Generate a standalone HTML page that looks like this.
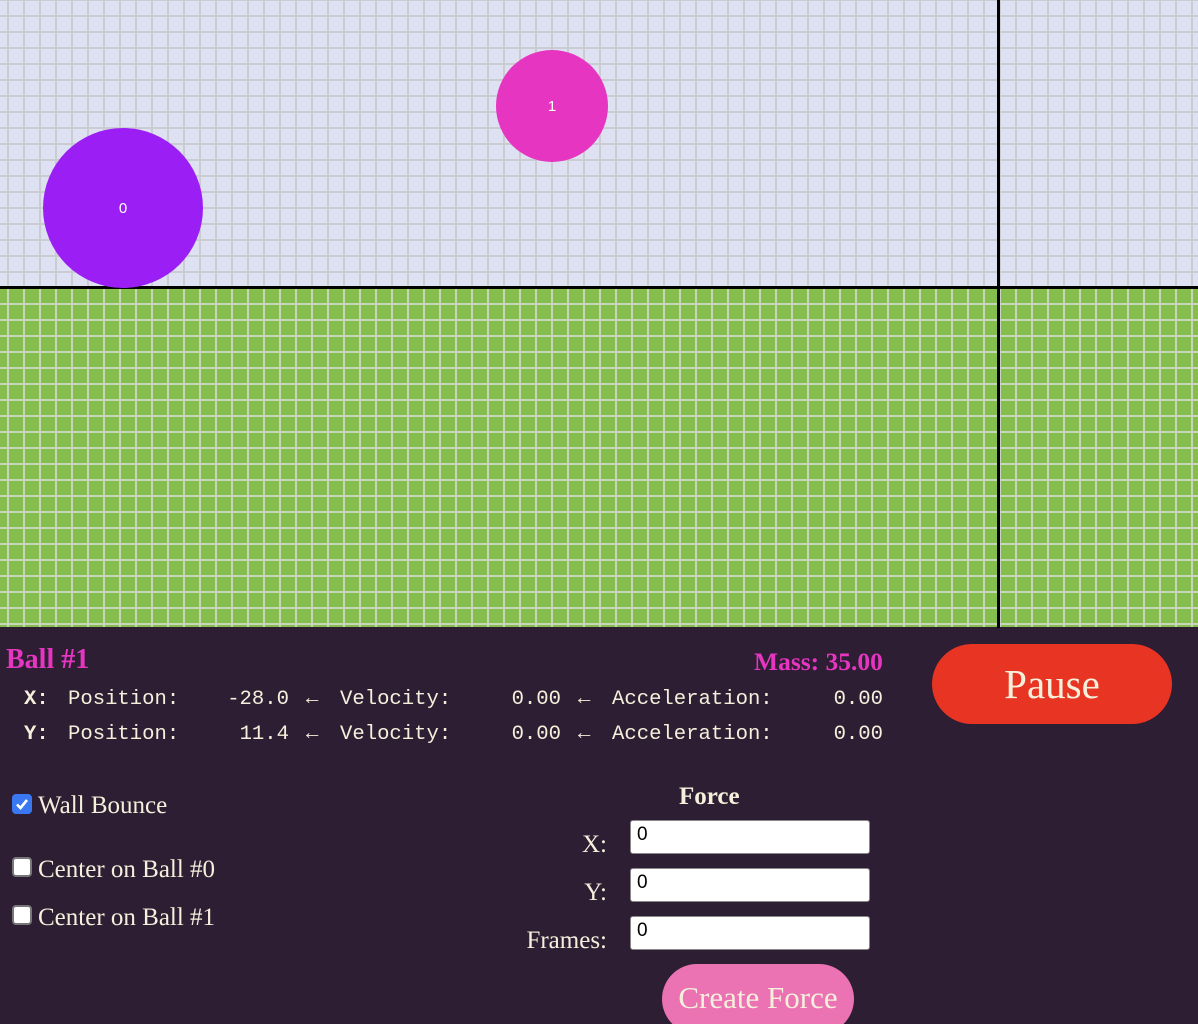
<!DOCTYPE html>
<html><head><meta charset="utf-8"><style>
*{margin:0;padding:0;box-sizing:border-box}
html,body{width:1198px;height:1024px;overflow:hidden;background:#2e1e33}
body{position:relative;font-family:"Liberation Serif",serif;color:#f5f0dc}
.sky{position:absolute;left:0;top:0;width:1198px;height:287px;background-color:#dde1f1;
background-image:linear-gradient(to right,#cbccd2 0 2px,transparent 2px 16px),linear-gradient(to bottom,#cbccd2 0 2px,transparent 2px 16px);
background-size:16px 16px;background-position:7px 15px}
.grass{position:absolute;left:0;top:289px;width:1198px;height:338px;background-color:#86be4e;
background-image:linear-gradient(to right,#c8d6bc 0 2px,transparent 2px 16px),linear-gradient(to bottom,#c8d6bc 0 2px,transparent 2px 16px);
background-size:16px 16px;background-position:7px 14px}
.hl{position:absolute;left:0;top:286px;width:1198px;height:3px;background:#000}
.vl{position:absolute;left:997px;top:0;width:3px;height:628px;background:#000}
.ball{position:absolute;border-radius:50%;color:#fff;font-family:"Liberation Sans",sans-serif;font-size:15px;display:flex;align-items:center;justify-content:center}
.m{position:absolute;font-family:"Liberation Mono",monospace;font-size:20.6px;line-height:20px;white-space:pre}
.r{text-align:right}
.t{position:absolute;white-space:nowrap}
.cb{position:absolute;width:20px;height:20px;border:2px solid #777;border-radius:4px;background:#fff}
input{position:absolute;left:630px;width:240px;height:34px;border:1px solid #888;border-radius:3px;font-family:"Liberation Sans",sans-serif;font-size:19px;padding:0 0 4px 6px;background:#fff;color:#000}
</style></head><body>
<div class="sky"></div><div class="grass"></div><div class="hl"></div><div class="vl"></div>
<div class="ball" style="left:43px;top:128px;width:160px;height:160px;background:#9b1ff5">0</div>
<div class="ball" style="left:496px;top:50px;width:112px;height:112px;background:#e535c1">1</div>

<div class="t" style="left:6px;top:644px;font-size:28px;font-weight:bold;color:#e535c1">Ball #1</div>
<div class="t" style="left:754px;top:647px;font-size:25.5px;font-weight:bold;color:#e535c1">Mass: 35.00</div>
<div class="t" style="left:932px;top:644px;width:240px;height:80px;border-radius:40px;background:#e83422;font-size:41px;text-align:center;line-height:80px">Pause</div>

<div class="m" style="left:24px;top:690px;font-weight:bold">X:</div>
<div class="m" style="left:68px;top:690px">Position:</div>
<div class="m r" style="left:189px;width:100px;top:690px">-28.0</div>
<div class="m" style="left:306px;top:690px">←</div>
<div class="m" style="left:340px;top:690px">Velocity:</div>
<div class="m r" style="left:461px;width:100px;top:690px">0.00</div>
<div class="m" style="left:578px;top:690px">←</div>
<div class="m" style="left:612px;top:690px">Acceleration:</div>
<div class="m r" style="left:783px;width:100px;top:690px">0.00</div>

<div class="m" style="left:24px;top:725px;font-weight:bold">Y:</div>
<div class="m" style="left:68px;top:725px">Position:</div>
<div class="m r" style="left:189px;width:100px;top:725px">11.4</div>
<div class="m" style="left:306px;top:725px">←</div>
<div class="m" style="left:340px;top:725px">Velocity:</div>
<div class="m r" style="left:461px;width:100px;top:725px">0.00</div>
<div class="m" style="left:578px;top:725px">←</div>
<div class="m" style="left:612px;top:725px">Acceleration:</div>
<div class="m r" style="left:783px;width:100px;top:725px">0.00</div>

<div class="cb" style="left:12px;top:794px;background:#3a78f2;border-color:#3a78f2"><svg width="16" height="16" viewBox="0 0 16 16" style="position:absolute;left:0;top:0"><path d="M3 8.5 L6.5 12 L13 4" stroke="#fff" stroke-width="2.6" fill="none"/></svg></div>
<div class="t" style="left:38px;top:792px;font-size:25px">Wall Bounce</div>
<div class="cb" style="left:12px;top:857px"></div>
<div class="t" style="left:38px;top:856px;font-size:25px">Center on Ball #0</div>
<div class="cb" style="left:12px;top:905px"></div>
<div class="t" style="left:38px;top:904px;font-size:25px">Center on Ball #1</div>

<div class="t" style="left:679px;top:783px;font-size:25px;font-weight:bold">Force</div>
<div class="t" style="left:500px;width:107px;text-align:right;top:831px;font-size:25px">X:</div>
<div class="t" style="left:500px;width:107px;text-align:right;top:879px;font-size:25px">Y:</div>
<div class="t" style="left:500px;width:107px;text-align:right;top:927px;font-size:25px">Frames:</div>
<input style="top:820px" value="0">
<input style="top:868px" value="0">
<input style="top:916px" value="0">
<div class="t" style="left:662px;top:964px;width:192px;height:70px;border-radius:35px;background:#eb73b3;font-size:31px;text-align:center;line-height:68px">Create Force</div>
</body></html>
